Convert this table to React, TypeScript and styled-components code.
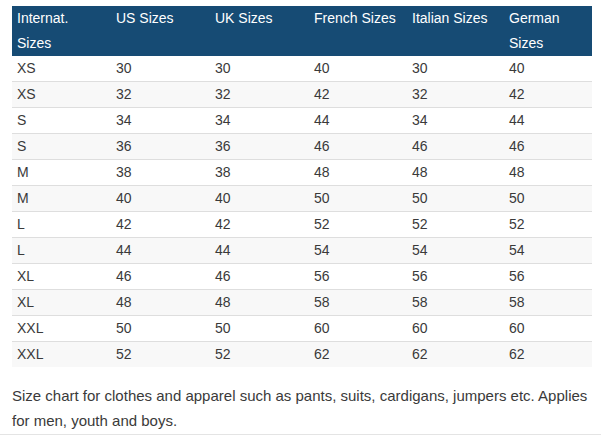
import React from "react";
import styled, { createGlobalStyle } from "styled-components";

const Global = createGlobalStyle`
  html, body { margin: 0; padding: 0; background: #fff; }
  body { font-family: "Liberation Sans", Arial, sans-serif; color: #333; }
`;

const Page = styled.div`
  padding: 6px 9px 0 12px;
  width: 601px;
  box-sizing: border-box;
`;

const Table = styled.table`
  width: 580px;
  border-collapse: collapse;
  table-layout: fixed;
  font-size: 14px;
`;

const HeadCell = styled.th`
  background: #164b74;
  color: #fff;
  font-weight: normal;
  text-align: left;
  vertical-align: top;
  line-height: 25px;
  padding: 0 5px;
`;

const Row = styled.tr<{ $striped: boolean }>`
  background: ${(p) => (p.$striped ? "#f8f8f8" : "#fff")};
  border-top: 1px solid #dedede;
  &:first-child { border-top: none; }
`;

const Cell = styled.td`
  line-height: 25px;
  padding: 0 5px;
  color: #3a3a3a;
`;

const Caption = styled.p`
  margin: 16px -9px 0 -12px;
  padding: 0 9px 1px 12px;
  font-size: 15px;
  line-height: 25px;
  color: #3a3a3a;
  border-bottom: 1px solid #e4e4e4;
`;

const widths = [99, 99, 99, 98, 97, 88];
const headers = ["Internat. Sizes", "US Sizes", "UK Sizes", "French Sizes", "Italian Sizes", "German Sizes"];
const rows: string[][] = [
  ["XS", "30", "30", "40", "30", "40"],
  ["XS", "32", "32", "42", "32", "42"],
  ["S", "34", "34", "44", "34", "44"],
  ["S", "36", "36", "46", "46", "46"],
  ["M", "38", "38", "48", "48", "48"],
  ["M", "40", "40", "50", "50", "50"],
  ["L", "42", "42", "52", "52", "52"],
  ["L", "44", "44", "54", "54", "54"],
  ["XL", "46", "46", "56", "56", "56"],
  ["XL", "48", "48", "58", "58", "58"],
  ["XXL", "50", "50", "60", "60", "60"],
  ["XXL", "52", "52", "62", "62", "62"],
];

export default function App() {
  return (
    <>
      <Global />
      <Page>
        <Table>
          <colgroup>
            {widths.map((w, i) => (
              <col key={i} style={{ width: w }} />
            ))}
          </colgroup>
          <thead>
            <tr>
              {headers.map((h) => (
                <HeadCell key={h}>{h}</HeadCell>
              ))}
            </tr>
          </thead>
          <tbody>
            {rows.map((r, i) => (
              <Row key={i} $striped={i % 2 === 1}>
                {r.map((c, j) => (
                  <Cell key={j}>{c}</Cell>
                ))}
              </Row>
            ))}
          </tbody>
        </Table>
        <Caption>
          Size chart for clothes and apparel such as pants, suits, cardigans, jumpers etc. Applies for men, youth and boys.
        </Caption>
      </Page>
    </>
  );
}
